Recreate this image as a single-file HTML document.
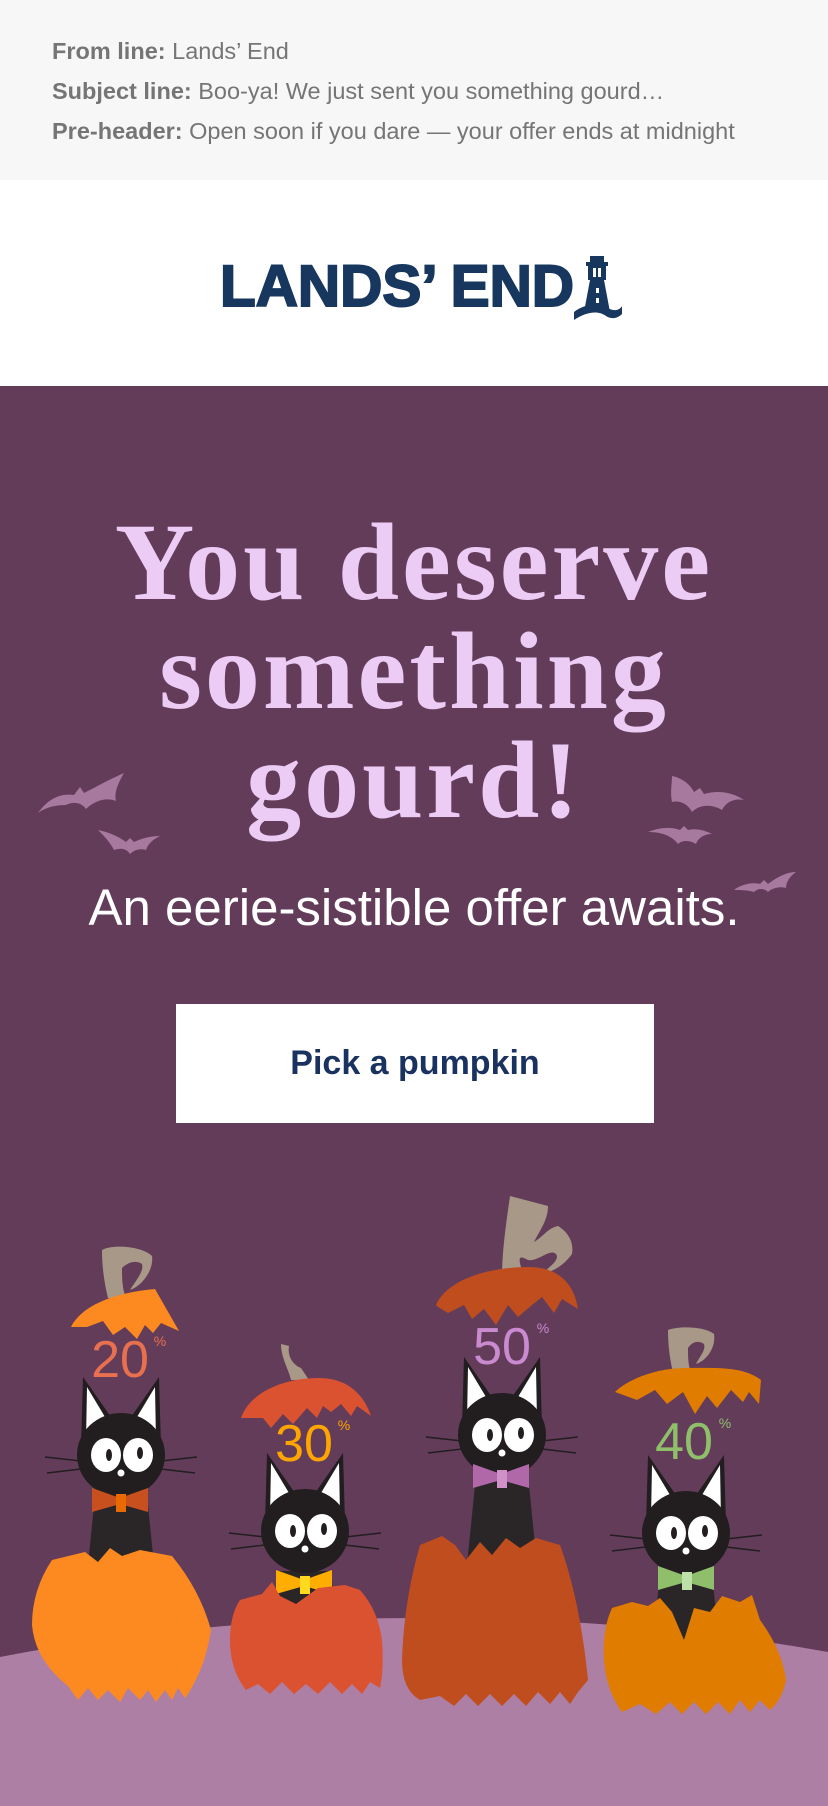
<!DOCTYPE html>
<html><head><meta charset="utf-8"><style>
*{margin:0;padding:0;box-sizing:border-box}
body{width:828px;height:1806px;overflow:hidden;background:#fff;font-family:"Liberation Sans",sans-serif}
.top{position:absolute;left:0;top:0;width:828px;height:180px;background:#f7f7f7;color:#757575;font-size:23.5px}
.top p{position:absolute;left:52px;white-space:nowrap}
.top b{font-weight:bold;color:#757575}
.hero{position:absolute;left:0;top:386px;width:828px;height:1420px;background:#633c5a;overflow:hidden}
h1{position:absolute;left:0;width:828px;text-align:center;font-family:"Liberation Serif",serif;font-weight:bold;color:#eccbf5;font-size:110px;line-height:109px;letter-spacing:3px}
.sub{position:absolute;left:0;width:828px;text-align:center;color:#fff;font-size:51px;top:492px;line-height:60px}
.btn{position:absolute;left:176px;top:618px;width:478px;height:119px;background:#fff;color:#1a3260;font-weight:bold;font-size:34px;text-align:center;line-height:119px}
</style></head><body>
<div class="top">
<p style="top:38px"><b>From line:</b> Lands’ End</p>
<p style="top:78px"><b>Subject line:</b> Boo-ya! We just sent you something gourd…</p>
<p style="top:118px"><b>Pre-header:</b> Open soon if you dare — your offer ends at midnight</p>
</div>
<svg style="position:absolute;left:0;top:180px" width="828" height="206" viewBox="0 180 828 206">
<text x="220" y="306" font-family="Liberation Sans" font-weight="bold" font-size="58" fill="#17375e" stroke="#17375e" stroke-width="2" textLength="354" lengthAdjust="spacingAndGlyphs">LANDS’ END</text>
<g fill="#17375e">
<rect x="590" y="256" width="14" height="6"/>
<rect x="586" y="262" width="22" height="4"/>
<path d="M588 266h18v14h-18z M590 280h14l6 32h-26z"/>
<path d="M574 312c10-8 26-10 34-4 6 4 12 2 14-2v8c-4 4-10 6-16 2-8-6-20-4-32 4z"/>
</g>
<g fill="#fff"><rect x="593" y="268" width="3" height="9"/><rect x="598" y="268" width="3" height="9"/><rect x="596" y="288" width="3" height="5"/><rect x="596" y="298" width="3" height="5"/></g>
</svg>
<div class="hero">
<h1 style="top:122px">You deserve<br>something<br>gourd!</h1>
<svg style="position:absolute;left:0;top:0" width="828" height="1420" viewBox="0 386 828 1420">
<g fill="#a8799f">
<path d="M38 813c10-14 22-20 36-18l6-8 4 6c12-6 26-14 40-20-6 10-10 20-8 28-10-4-22 0-30 8-4-6-12-8-20-4-10 0-20 2-28 8z"/>
<path d="M98 830c10 2 20 6 28 12l4-4 4 4c8-4 18-6 26-6-8 4-12 8-14 14-6-2-12 0-16 4-4-6-10-6-16-4-4-8-10-14-16-20z"/>
<path d="M672 776c10 2 18 8 22 16l6-4 4 6c14-4 28-2 40 6-10-2-18 2-22 10-10-6-22-6-30 2-4-8-12-12-20-10-2-10-0-18 0-26z"/>
<path d="M648 832c10-4 22-6 32-2l4-4 4 4c8-2 16 0 24 4-8 0-14 4-16 10-6-4-14-4-18 0-6-8-16-12-30-12z"/>
<path d="M734 890c8-6 18-8 26-6l4-4 4 4c8-6 18-12 28-12-6 4-10 10-10 16-6-2-14 0-18 4-4-4-10-4-14 0-6-2-14-2-20-2z"/>
</g>
<path d="M0 1657 Q200 1618 420 1618 Q640 1618 828 1652 V1806 H0Z" fill="#ad7fa5"/>
<g fill="#a89888">
<path d="M102 1250c10-6 40-4 50 6 2 14-10 30-22 34 6-10 14-18 12-26-6-4-14-2-20 4 0 10 0 20 4 30h-18c-4-16-6-32-6-48z"/>
<path d="M281 1344l8 2c-2 12 6 20 12 22l8 12h-18c-2-10-10-22-10-36z"/>
<path d="M510 1196l38 10c0 14-8 24-14 36 10-6 14-14 24-16 10 6 16 16 14 28-10 14-22 18-30 20 8-8 18-14 14-20-6-6-18 8-28 6-8-4-12-6-4 16h-22c0-24 4-52 8-80z"/>
<path d="M668 1330c10-4 36-4 46 4 2 12-6 26-18 30 4-8 10-14 8-20-6-4-12-2-16 4 0 10 0 18 4 28h-18c-4-14-6-30-6-46z"/>
</g>
<path d="M71 1327c10-20 40-34 84-38l24 42-18-8-8 10-8-8-8 14-12-12-12 8-10-14-16 6z" fill="#fd8a20"/>
<path d="M241 1418c8-24 40-40 78-40 26 0 44 14 52 38l-14-10-6 10-10-12-10 8-8-6-6 12-10-10-14 16-10-10-12 14-8-10z" fill="#db5230"/>
<path d="M436 1305c10-24 50-38 92-38 30 0 46 16 50 42l-16-10-8 14-12-16-10 8-14 12-10-12-12 20-12-16-12 10-8-14-16 8-10-6z" fill="#bf4d1e"/>
<path d="M615 1392c14-14 44-24 70-24 30 0 58-2 76 12l-2 24-10-12-6 10-12-12-14 18-10-12-12 18-12-22-16 12-12-14-18 10z" fill="#e07c00"/>
<g font-family="Liberation Sans" text-anchor="middle">
<text x="120" y="1377" font-size="52" fill="#e8704f">20</text><text x="160" y="1346" font-size="14" fill="#e8704f">%</text>
<text x="304" y="1461" font-size="52" fill="#ffa500">30</text><text x="344" y="1430" font-size="14" fill="#ffa500">%</text>
<text x="502" y="1364" font-size="52" fill="#c98ad0">50</text><text x="543" y="1333" font-size="14" fill="#c98ad0">%</text>
<text x="684" y="1459" font-size="52" fill="#8fbf6b">40</text><text x="725" y="1428" font-size="14" fill="#8fbf6b">%</text>
</g>
<defs>
<g id="cat">
<path d="M-26 40 L-36 140 H36 L26 40Z" fill="#2a2628"/>
<path d="M-40-8 L-38-78 L-10-38Z M40-8 L38-78 L10-38Z" fill="#221e20"/>
<path d="M-35-14 L-34-68 L-16-38Z M35-14 L34-68 L16-38Z" fill="#fff"/>
<ellipse cx="0" cy="0" rx="44" ry="42" fill="#221e20"/>
<ellipse cx="-15" cy="0" rx="15" ry="17" fill="#fff"/><ellipse cx="17" cy="0" rx="15" ry="17" fill="#fff"/>
<ellipse cx="-12" cy="0" rx="3" ry="6" fill="#221e20"/><ellipse cx="19" cy="-2" rx="3" ry="6" fill="#221e20"/>
<circle cx="0" cy="18" r="3.5" fill="#fff"/>
<path d="M-40 6l-36-4 M-40 14l-34 4 M40 6l36-4 M40 14l34 4" stroke="#221e20" stroke-width="1.5"/>
</g>
</defs>
<use href="#cat" x="121" y="1455"/>
<use href="#cat" x="305" y="1531"/>
<use href="#cat" x="502" y="1435"/>
<use href="#cat" x="686" y="1533"/>
<g>
<path d="M92 1488l28 10 28-10v24l-28-8-28 8z" fill="#c8501e"/><rect x="116" y="1494" width="10" height="18" fill="#e86a00"/>
<path d="M276 1570l28 10 28-10v24l-28-8-28 8z" fill="#ffae00"/><rect x="300" y="1576" width="10" height="18" fill="#ffd820"/>
<path d="M473 1464l28 10 28-10v24l-28-8-28 8z" fill="#b068a8"/><rect x="497" y="1470" width="10" height="18" fill="#d090c8"/>
<path d="M658 1566l28 10 28-10v24l-28-8-28 8z" fill="#8fbf6b"/><rect x="682" y="1572" width="10" height="18" fill="#bde0a8"/>
</g>
<path d="M52 1560 L85 1552 L98 1562 L110 1548 L122 1556 L140 1550 L172 1556 Q200 1590 211 1630 Q205 1670 185 1698 L178 1688 L172 1700 L165 1690 L156 1702 L148 1690 L140 1700 L128 1688 L120 1702 L108 1690 L98 1700 L88 1688 L78 1700 L68 1686 Q35 1660 32 1625 Q32 1590 52 1560Z" fill="#fd8a20"/>
<path d="M240 1600 L262 1594 L272 1582 L280 1596 L296 1604 L318 1588 L345 1585 L360 1590 Q378 1610 382 1640 Q384 1670 380 1688 L370 1682 L362 1694 L352 1684 L342 1694 L330 1682 L318 1694 L306 1684 L294 1694 L282 1682 L270 1694 L258 1684 L246 1690 Q230 1670 230 1640 Q230 1615 240 1600Z" fill="#db5230"/>
<path d="M420 1545 L442 1536 L455 1545 L466 1560 L480 1542 L492 1555 L506 1538 L520 1548 L536 1538 L560 1545 Q580 1600 588 1680 L578 1692 L570 1704 L560 1692 L550 1704 L538 1692 L526 1706 L514 1694 L502 1706 L490 1694 L478 1706 L466 1694 L454 1706 L440 1696 L420 1700 Q402 1690 402 1660 Q404 1600 420 1545Z" fill="#bf4d1e"/>
<path d="M612 1608 L632 1602 L648 1606 L660 1598 L672 1612 L684 1640 L694 1608 L710 1612 L722 1596 L740 1602 L752 1595 L760 1620 Q782 1650 786 1680 Q782 1700 770 1710 L760 1700 L750 1712 L740 1700 L730 1714 L718 1702 L706 1714 L694 1702 L682 1714 L670 1702 L656 1714 L640 1704 L622 1712 Q606 1690 604 1660 Q602 1630 612 1608Z" fill="#e07c00"/>
</svg>
<div class="sub">An eerie-sistible offer awaits.</div>
<div class="btn">Pick a pumpkin</div>
</div>
</body></html>
